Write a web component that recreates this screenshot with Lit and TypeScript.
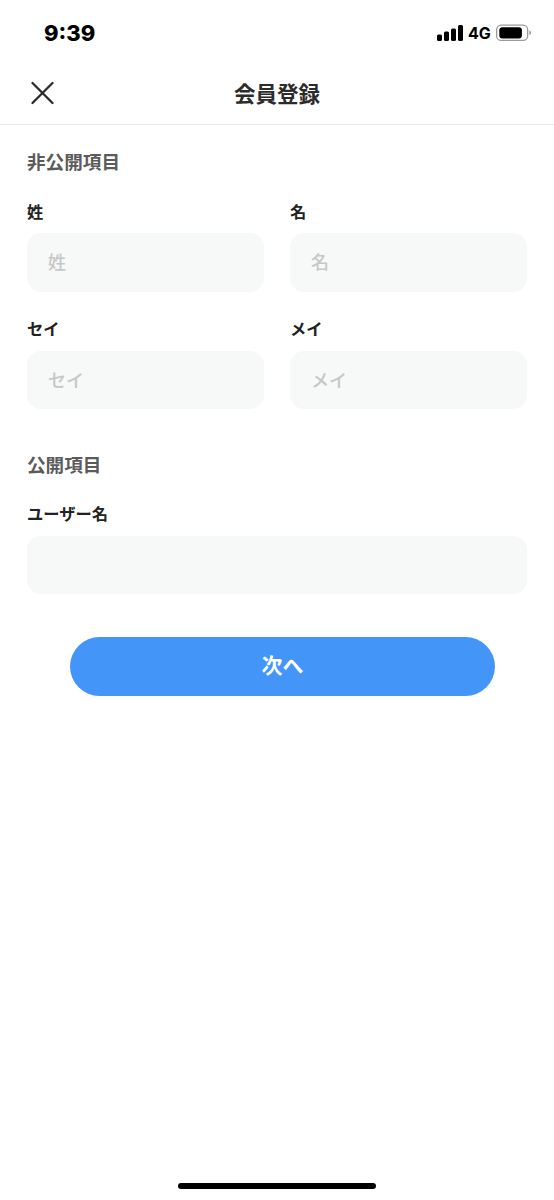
import { LitElement, html, css } from "lit";
import { customElement } from "lit/decorators.js";

@customElement("app-root")
export class AppRoot extends LitElement {
  static styles = css`
    :host {
      display: block;
      width: 554px;
      height: 1200px;
      background: #fff;
      font-family: "Noto Sans CJK JP", "Liberation Sans", sans-serif;
      color: #222;
      overflow: hidden;
    }
    .page { height: 1200px; display: flex; flex-direction: column; position: relative; }
    .status {
      height: 66px;
      display: flex;
      align-items: center;
      justify-content: space-between;
      padding: 0 22px 0 44px;
      box-sizing: border-box;
    }
    .time { font: 800 22px/32px Inter, "Liberation Sans", sans-serif; color: #000; letter-spacing: 0; }
    .right { display: flex; align-items: center; gap: 5px; }
    .net { font: 700 16px/20px Inter, "Liberation Sans", sans-serif; color: #000; width: 23px; }
    svg { display: block; }
    .nav {
      height: 58px;
      border-bottom: 1px solid #e9e9e9;
      display: flex;
      align-items: center;
      justify-content: center;
      position: relative;
      box-sizing: content-box;
    }
    .close { position: absolute; left: 30px; top: 15px; }
    .title { font-size: 21.5px; font-weight: 700; line-height: 56px; color: #2b2b2b; padding-bottom: 5px; }
    .form { padding: 0 27px; display: flex; flex-direction: column; }
    .section { font-size: 18.6px; font-weight: 700; color: #5b5b5b; line-height: 28px; }
    .s1 { margin-top: 22px; }
    .s2 { margin-top: 41px; }
    .grid { display: grid; grid-template-columns: 237px 237px; column-gap: 26px; row-gap: 23.5px; margin-top: 22.8px; }
    .one { margin-top: 22px; }
    .label { font-size: 16.3px; font-weight: 700; line-height: 26px; color: #222; margin-bottom: 9.5px; }
    .field {
      height: 58.5px;
      border-radius: 14px;
      background: #f7f8f8;
      display: flex;
      align-items: center;
      padding: 0 0 3px 21px;
      font-size: 18px;
      font-weight: 500;
      color: #c6c7c7;
      box-sizing: border-box;
    }
    .btnrow { padding-left: 70px; margin-top: 43px; }
    .btn {
      width: 425px;
      height: 59px;
      border-radius: 30px;
      background: #4495f8;
      color: #fff;
      font-size: 21px;
      font-weight: 700;
      display: flex;
      align-items: center;
      justify-content: center;
      padding-bottom: 5px;
      box-sizing: border-box;
    }
    .home {
      position: absolute;
      left: 178px;
      top: 1183px;
      width: 198px;
      height: 6px;
      border-radius: 3px;
      background: #000;
    }
  `;

  field(label: string, ph: string) {
    return html`<div>
      <div class="label">${label}</div>
      <div class="field">${ph}</div>
    </div>`;
  }

  render() {
    return html`<div class="page">
      <div class="status">
        <div class="time">9:39</div>
        <div class="right">
          <svg width="26" height="16" viewBox="0 0 26 16" fill="#000">
            <rect x="0" y="9.5" width="5" height="6.5" rx="1.5"></rect>
            <rect x="7" y="6.5" width="5" height="9.5" rx="1.5"></rect>
            <rect x="14" y="3.5" width="5" height="12.5" rx="1.5"></rect>
            <rect x="21" y="0" width="5" height="16" rx="1.5"></rect>
          </svg>
          <div class="net">4G</div>
          <svg width="36" height="18" viewBox="0 0 36 18">
            <rect x="0.65" y="1.2" width="31" height="15.2" rx="4.5" fill="none" stroke="#9a9a9a" stroke-width="1.3"></rect>
            <rect x="3.3" y="3.3" width="22.6" height="11.2" rx="3" fill="#000"></rect>
            <path d="M33.3 6.6c1.2.4 1.8 1.2 1.8 2.2s-.6 1.8-1.8 2.2z" fill="#9a9a9a"></path>
          </svg>
        </div>
      </div>
      <div class="nav">
        <svg class="close" width="24" height="24" viewBox="0 0 24 24" fill="none" stroke="#2b2b2b" stroke-width="2.3" stroke-linecap="round">
          <path d="M2.5 2L22.5 22M22.5 2L2.5 22"></path>
        </svg>
        <div class="title">会員登録</div>
      </div>
      <div class="form">
        <div class="section s1">非公開項目</div>
        <div class="grid">
          ${this.field("姓", "姓")}
          ${this.field("名", "名")}
          ${this.field("セイ", "セイ")}
          ${this.field("メイ", "メイ")}
        </div>
        <div class="section s2">公開項目</div>
        <div class="one">${this.field("ユーザー名", "")}</div>
      </div>
      <div class="btnrow"><div class="btn">次へ</div></div>
      <div class="home"></div>
    </div>`;
  }
}
